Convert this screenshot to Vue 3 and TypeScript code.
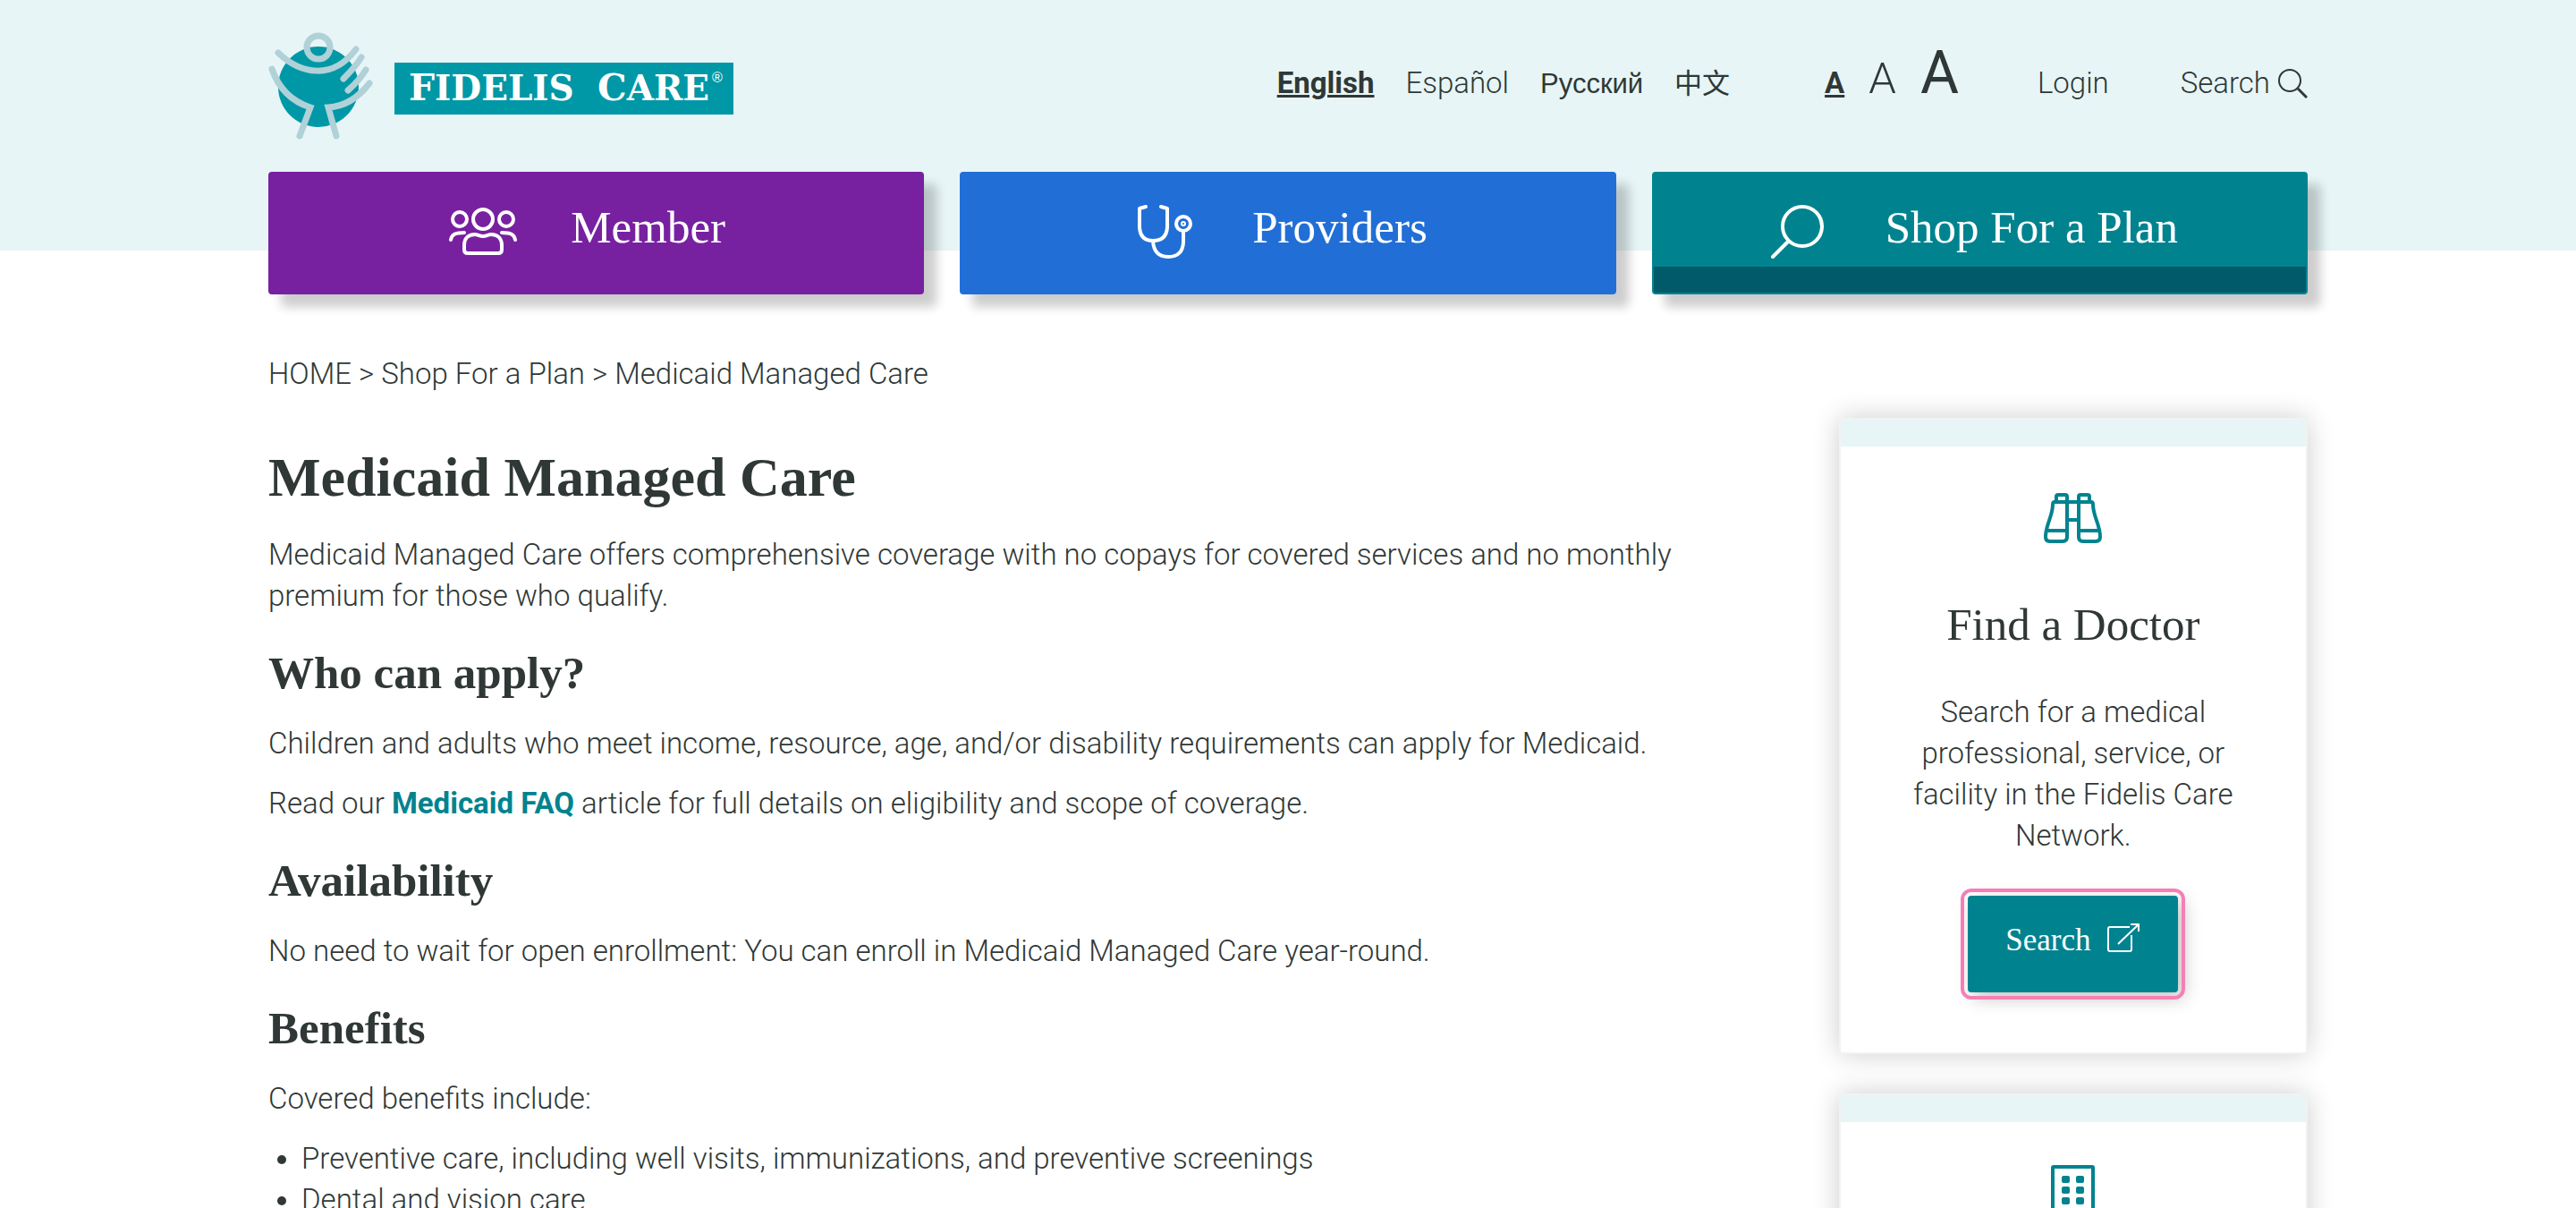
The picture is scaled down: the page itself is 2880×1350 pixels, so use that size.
<script setup lang="ts">
import { ref } from 'vue'

const languages = [
  { label: 'English', code: 'en' },
  { label: 'Español', code: 'es' },
  { label: 'Русский', code: 'ru' },
  { label: '中文', code: 'zh' },
]
const language = ref('en')

const textSizes = ['small', 'medium', 'large']
const textSize = ref('small')

const benefits = [
  'Preventive care, including well visits, immunizations, and preventive screenings',
  'Dental and vision care',
]
</script>

<template>
  <div class="page">
    <header class="header">
      <div class="container">
        <div class="topbar">
          <a class="logo" href="#" aria-label="Fidelis Care home">
            <svg width="520" height="120" viewBox="0 0 520 120">
              <circle cx="56" cy="61" r="45" fill="#0098a6" />
              <g fill="none" stroke="#b0d1d8" stroke-width="7" stroke-linecap="round">
                <circle cx="56" cy="17" r="13" />
                <path d="M11 23C36 47 72 54 98 19" />
                <path d="M104 28C98 38 92 44 84 52" />
                <path d="M109 42C103 52 97 58 89 65" />
                <path d="M113 57C100 74 86 83 67 84L76 116" />
                <path d="M4 41C12 64 28 78 47 84L35 116" />
              </g>
              <rect x="141" y="34" width="379" height="58" fill="#0098a6" />
              <g class="logo-text" fill="#fff">
                <text x="157" y="76"><tspan class="cap">F</tspan>IDELIS</text>
                <text x="368" y="76"><tspan class="cap">C</tspan>ARE</text>
                <text class="mark" x="496" y="56">®</text>
              </g>
            </svg>
          </a>
          <nav class="utility" aria-label="Utility">
            <div class="languages">
              <a
                v-for="item in languages"
                :key="item.code"
                href="#"
                :lang="item.code"
                :class="{ active: language === item.code }"
                @click.prevent="language = item.code"
              >{{ item.label }}</a>
            </div>
            <div class="sizes">
              <button
                v-for="size in textSizes"
                :key="size"
                type="button"
                :class="[size, { active: textSize === size }]"
                :aria-label="`Text size ${size}`"
                @click="textSize = size"
              >A</button>
            </div>
            <a href="#">Login</a>
            <a class="search-link" href="#">Search
              <svg width="34" height="34" viewBox="0 0 34 34" fill="none" stroke="currentColor" stroke-width="2">
                <circle cx="14" cy="14" r="12" />
                <path d="M23 23L33 33" stroke-width="3" />
              </svg>
            </a>
          </nav>
        </div>
        <nav class="tiles" aria-label="Main">
          <a class="tile member" href="#">
            <svg width="76" height="60" viewBox="0 0 76 60" fill="none" stroke="#fff" stroke-width="4" stroke-linecap="round" stroke-linejoin="round">
              <circle cx="38" cy="16" r="11" />
              <circle cx="12" cy="16" r="8" />
              <circle cx="64" cy="16" r="8" />
              <path d="M2 39C3 33 7 31 17 31M74 39C73 33 69 31 59 31" />
              <path d="M17 50V45C17 38 21 33 29 33C32 33 34 35 38 35C42 35 44 33 47 33C55 33 59 38 59 45V50Q59 54 55 54H21Q17 54 17 50Z" />
            </svg>
            <span>Member</span>
          </a>
          <a class="tile providers" href="#">
            <svg width="76" height="60" viewBox="0 0 76 60" fill="none" stroke="#fff" stroke-width="4" stroke-linecap="round" stroke-linejoin="round">
              <path d="M17 2L10 4V25Q11 40 25 40Q40 40 41 25V4L34 2" />
              <path d="M25 40Q26 58 42 58Q58 58 59 42V30" />
              <circle cx="59" cy="21" r="8" />
              <circle cx="59" cy="21" r="1" />
            </svg>
            <span>Providers</span>
          </a>
          <a class="tile shop" href="#">
            <svg width="76" height="60" viewBox="0 0 76 60" fill="none" stroke="#fff" stroke-width="4" stroke-linecap="round">
              <circle cx="43" cy="24" r="22" />
              <path d="M27 41L10 58" />
            </svg>
            <span>Shop For a Plan</span>
          </a>
        </nav>
      </div>
    </header>

    <div class="container body">
      <nav class="breadcrumb" aria-label="Breadcrumb">
        <a href="#">HOME</a> &gt; <a href="#">Shop For a Plan</a> &gt; <span>Medicaid Managed Care</span>
      </nav>
      <div class="columns">
        <main>
          <h1>Medicaid Managed Care</h1>
          <p>Medicaid Managed Care offers comprehensive coverage with no copays for covered services and no monthly premium for those who qualify.</p>
          <h2>Who can apply?</h2>
          <p>Children and adults who meet income, resource, age, and/or disability requirements can apply for Medicaid.</p>
          <p>Read our <a class="inline-link" href="#">Medicaid FAQ</a> article for full details on eligibility and scope of coverage.</p>
          <h2>Availability</h2>
          <p>No need to wait for open enrollment: You can enroll in Medicaid Managed Care year-round.</p>
          <h2>Benefits</h2>
          <p>Covered benefits include:</p>
          <ul>
            <li v-for="benefit in benefits" :key="benefit">{{ benefit }}</li>
          </ul>
        </main>
        <aside>
          <section class="card">
            <svg width="65" height="64" viewBox="0 -4 65 64" fill="none" stroke="#00838f" stroke-width="4" stroke-linejoin="round">
              <path d="M14 10V4Q14 2 16 2H24Q26 2 26 4V10" />
              <path d="M39 10V4Q39 2 41 2H49Q51 2 51 4V10" />
              <path d="M26 10H12Q10 10 10 13C10 26 2 35 2 49Q2 54 7 54H21Q26 54 26 49Z" />
              <path d="M39 10H53Q55 10 55 13C55 26 63 35 63 49Q63 54 58 54H44Q39 54 39 49Z" />
              <path d="M26 10H39M26 30H39M4 42H26M39 42H61" />
            </svg>
            <h3>Find a Doctor</h3>
            <p>Search for a medical professional, service, or facility in the Fidelis Care Network.</p>
            <button class="search-button" type="button">
              <span>Search</span>
              <svg width="38" height="34" viewBox="0 0 38 34" fill="none" stroke="#fff" stroke-width="2" stroke-linejoin="round">
                <path d="M26 5H4Q2 5 2 7V30Q2 32 4 32H26Q28 32 28 30V14" />
                <path d="M13 24L36 2M27 2H36V10" />
              </svg>
            </button>
          </section>
          <section class="card">
            <svg width="49" height="64" viewBox="0 0 49 64" fill="none" stroke="#00838f" stroke-width="4" stroke-linejoin="round">
              <rect x="2" y="2" width="45" height="60" rx="1" />
              <g fill="#00838f" stroke="none">
                <rect x="12" y="12" width="9" height="8" rx="2" />
                <rect x="28" y="12" width="9" height="8" rx="2" />
                <rect x="12" y="24" width="9" height="8" rx="2" />
                <rect x="28" y="24" width="9" height="8" rx="2" />
                <rect x="12" y="36" width="9" height="8" rx="2" />
                <rect x="28" y="36" width="9" height="8" rx="2" />
              </g>
              <path d="M20 62V52Q20 50 25 50Q29 50 29 52V62" />
            </svg>
          </section>
        </aside>
      </div>
    </div>
  </div>
</template>

<style>
body {
  margin: 0;
}
</style>

<style scoped>
.page {
  height: 100vh;
  overflow-x: hidden;
  overflow-y: auto;
  scrollbar-width: none;
  background: #fff;
  color: #2f3836;
  font-family: Roboto, "Liberation Sans", "Noto Sans CJK SC", sans-serif;
  font-size: 33px;
  font-weight: 300;
  line-height: 46px;
}
a {
  color: inherit;
  text-decoration: none;
}
svg {
  display: block;
  flex: none;
}
h1,
h2,
h3,
p,
ul {
  margin: 0;
}
.container {
  max-width: 2280px;
  margin: 0 auto;
}
.header {
  background: #e7f5f6;
}
.topbar {
  display: flex;
  justify-content: space-between;
  align-items: flex-start;
  padding: 36px 0;
}
.logo-text {
  font-family: "DejaVu Serif", serif;
  font-weight: 700;
  font-size: 39px;
}
.logo-text .cap {
  font-size: 41px;
}
.logo-text .mark {
  font-family: "Liberation Sans", sans-serif;
  font-weight: 400;
  font-size: 16px;
}
.utility {
  display: flex;
  align-items: baseline;
  margin-top: 23px;
}
.languages {
  display: flex;
  align-items: baseline;
  gap: 35px;
  margin-right: 106px;
}
.languages [lang="ru"],
.languages [lang="zh"] {
  font-family: "Liberation Sans", "Noto Sans CJK SC", sans-serif;
  font-size: 31px;
  font-weight: 400;
}
.languages .active,
.sizes .active {
  font-weight: 700;
  text-decoration: underline;
  text-decoration-thickness: 3px;
}
.sizes {
  display: flex;
  align-items: baseline;
  gap: 27px;
  margin-right: 88px;
}
.sizes button {
  padding: 0;
  border: 0;
  background: none;
  color: inherit;
  font: inherit;
  cursor: pointer;
}
.sizes .medium {
  font-size: 49px;
}
.sizes .large {
  font-size: 66px;
  font-weight: 400;
}
.search-link {
  display: flex;
  align-items: center;
  gap: 8px;
  margin-left: 80px;
}
.tiles {
  display: grid;
  grid-template-columns: repeat(3, 1fr);
  gap: 40px;
  margin-bottom: -49px;
}
.header .container {
  display: flow-root;
}
.tile {
  display: flex;
  justify-content: center;
  gap: 60px;
  box-sizing: border-box;
  height: 137px;
  padding: 35px 20px 0 0;
  border: 2px solid transparent;
  border-radius: 4px;
  box-shadow: 14px 14px 12px rgba(0, 0, 0, 0.2);
  color: #fff;
  font-family: "Liberation Serif", serif;
  font-size: 51px;
  font-weight: 400;
  line-height: 50px;
}
.member {
  border-color: #7721a0;
  background: #7721a0;
}
.providers {
  border-color: #216fd6;
  background: #216fd6;
}
.shop {
  border-color: #00838f;
  background: linear-gradient(#005a69, #005a69) bottom / 100% 29px no-repeat padding-box, #00838f;
}
.body {
  padding-top: 115px;
}
.columns {
  display: grid;
  grid-template-columns: minmax(0, 1fr) 23%;
  gap: 140px;
}
h1,
h2,
h3 {
  font-family: "Liberation Serif", serif;
  font-size: 51px;
  font-weight: 700;
  line-height: 58px;
}
h1 {
  margin: 56px 0 28px;
  font-size: 62px;
  line-height: 72px;
}
h2 {
  margin: 34px 0 27px;
}
p + p,
p + ul {
  margin-top: 21px;
}
.inline-link {
  color: #00838f;
  font-weight: 700;
}
ul {
  padding-left: 37px;
}
aside {
  display: flex;
  flex-direction: column;
  gap: 44px;
  margin-top: 26px;
}
.card {
  display: flex;
  flex-direction: column;
  align-items: center;
  padding: 48px 60px 67px;
  border: 2px solid #f2f2f2;
  border-radius: 4px;
  background: #fff;
  box-shadow: 0 0 30px rgba(0, 0, 0, 0.2);
  text-align: center;
}
.card::before {
  content: "";
  align-self: stretch;
  height: 30px;
  margin: -48px -60px 48px;
  background: #e7f5f6;
}
.card h3 {
  margin: 58px 0 46px;
  font-weight: 400;
}
.search-button {
  display: flex;
  gap: 18px;
  height: 108px;
  margin-top: 44px;
  padding: 30px 42px;
  border: 0;
  border-radius: 4px;
  outline: 4px solid #f57fb5;
  outline-offset: 4px;
  background: #00838f;
  box-shadow: 6px 6px 20px rgba(0, 0, 0, 0.25);
  color: #fff;
  font-family: "Liberation Serif", serif;
  font-size: 35px;
  line-height: 40px;
  cursor: pointer;
}
</style>
